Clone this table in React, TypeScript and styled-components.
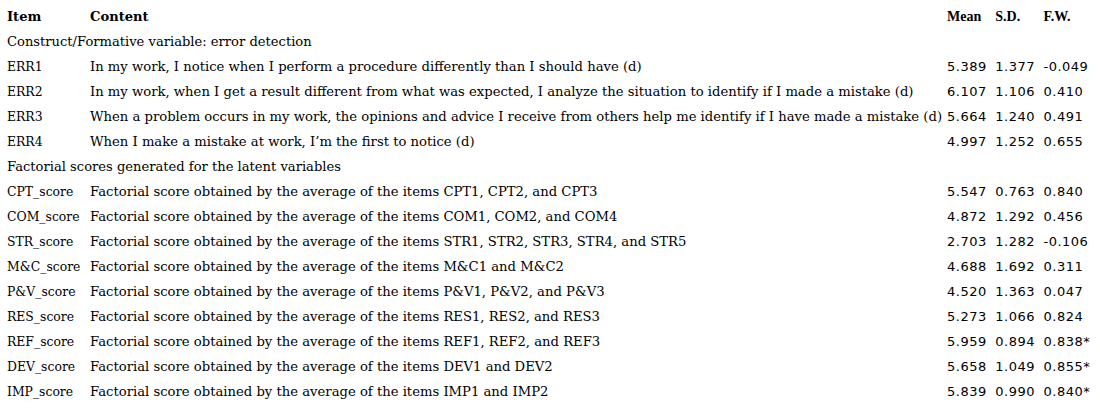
import React from "react";
import styled, { createGlobalStyle } from "styled-components";

const Global = createGlobalStyle`
  html, body { margin: 0; padding: 0; background: #fff; }
  body { font-family: "DejaVu Serif", serif; color: #000; }
`;

const Table = styled.table`
  border-collapse: collapse;
  margin: 4px 0 0 7px;
  font-size: 13.1px;
`;

const HeadCell = styled.th<{ $serif?: boolean; $w?: number }>`
  text-align: left;
  font-weight: bold;
  font-family: ${(p) => (p.$serif ? '"Liberation Serif", serif' : '"DejaVu Serif", serif')};
  font-size: ${(p) => (p.$serif ? "14px" : "13.1px")};
  height: 25px;
  width: ${(p) => (p.$w ? `${p.$w}px` : "auto")};
  padding: 0 ${(p) => (p.$serif ? "8.5px" : p.$w ? "0" : "5px")} 0 0;
  white-space: nowrap;
  &:last-child { padding-right: 0; }
`;

const ItemCell = styled.td`
  height: 25px;
  width: 83px;
  min-width: 83px;
  padding: 0;
  font-size: 12.4px;
  white-space: nowrap;
`;

const Cell = styled.td`
  height: 25px;
  padding: 0 5px 0 0;
  white-space: nowrap;
  font-size: 13.18px;
`;

const NumCell = styled.td`
  height: 25px;
  padding: 0 8.5px 0 0;
  white-space: nowrap;
  font-family: "DejaVu Sans", sans-serif;
  font-size: 13px;
  letter-spacing: 0.5px;
  &:last-child { padding-right: 0; }
`;

const GroupCell = styled.td`
  height: 25px;
  padding: 0;
  white-space: nowrap;
`;

type Row = [string, string, string, string, string];

const errRows: Row[] = [
  ["ERR1", "In my work, I notice when I perform a procedure differently than I should have (d)", "5.389", "1.377", "-0.049"],
  ["ERR2", "In my work, when I get a result different from what was expected, I analyze the situation to identify if I made a mistake (d)", "6.107", "1.106", "0.410"],
  ["ERR3", "When a problem occurs in my work, the opinions and advice I receive from others help me identify if I have made a mistake (d)", "5.664", "1.240", "0.491"],
  ["ERR4", "When I make a mistake at work, I\u2019m the first to notice (d)", "4.997", "1.252", "0.655"],
];

const scoreRows: Row[] = [
  ["CPT_score", "Factorial score obtained by the average of the items CPT1, CPT2, and CPT3", "5.547", "0.763", "0.840"],
  ["COM_score", "Factorial score obtained by the average of the items COM1, COM2, and COM4", "4.872", "1.292", "0.456"],
  ["STR_score", "Factorial score obtained by the average of the items STR1, STR2, STR3, STR4, and STR5", "2.703", "1.282", "-0.106"],
  ["M&C_score", "Factorial score obtained by the average of the items M&C1 and M&C2", "4.688", "1.692", "0.311"],
  ["P&V_score", "Factorial score obtained by the average of the items P&V1, P&V2, and P&V3", "4.520", "1.363", "0.047"],
  ["RES_score", "Factorial score obtained by the average of the items RES1, RES2, and RES3", "5.273", "1.066", "0.824"],
  ["REF_score", "Factorial score obtained by the average of the items REF1, REF2, and REF3", "5.959", "0.894", "0.838*"],
  ["DEV_score", "Factorial score obtained by the average of the items DEV1 and DEV2", "5.658", "1.049", "0.855*"],
  ["IMP_score", "Factorial score obtained by the average of the items IMP1 and IMP2", "5.839", "0.990", "0.840*"],
];

const renderRow = (r: Row) => (
  <tr key={r[0]}>
    <ItemCell>{r[0]}</ItemCell>
    <Cell>{r[1]}</Cell>
    <NumCell>{r[2]}</NumCell>
    <NumCell>{r[3]}</NumCell>
    <NumCell>{r[4]}</NumCell>
  </tr>
);

export default function App() {
  return (
    <>
      <Global />
      <Table>
        <thead>
          <tr>
            <HeadCell $w={83}>Item</HeadCell>
            <HeadCell>Content</HeadCell>
            <HeadCell $serif>Mean</HeadCell>
            <HeadCell $serif>S.D.</HeadCell>
            <HeadCell $serif>F.W.</HeadCell>
          </tr>
        </thead>
        <tbody>
          <tr>
            <GroupCell colSpan={5}>Construct/Formative variable: error detection</GroupCell>
          </tr>
          {errRows.map(renderRow)}
          <tr>
            <GroupCell colSpan={5}>Factorial scores generated for the latent variables</GroupCell>
          </tr>
          {scoreRows.map(renderRow)}
        </tbody>
      </Table>
    </>
  );
}
